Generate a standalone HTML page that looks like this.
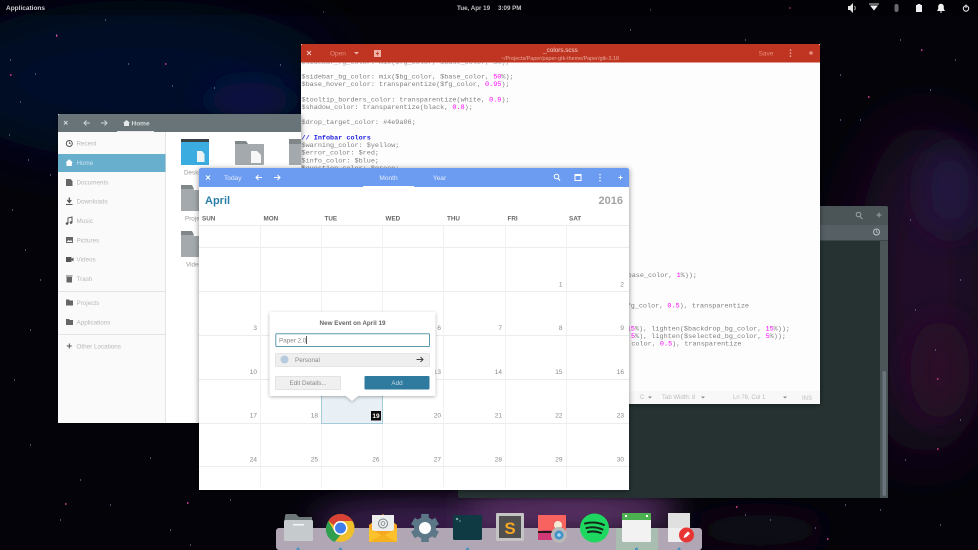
<!DOCTYPE html>
<html><head><meta charset="utf-8"><title>Desktop</title>
<style>
html,body{margin:0;padding:0;background:#03030f;width:978px;height:550px;overflow:hidden}
svg{display:block;font-family:"Liberation Sans",sans-serif}
.m{font-family:"Liberation Mono",monospace;font-size:6.8px;fill:#808080}
.p{fill:#f0f}
.s{font-size:6.3px;fill:#b8b8b8}
.n{font-size:6.5px;fill:#8a8a8a;text-anchor:end}
.d{font-size:6.3px;font-weight:bold;fill:#666}
.h{font-size:6.6px;fill:#e4ecfb}
</style></head><body>
<svg width="978" height="550" viewBox="0 0 978 550" xmlns="http://www.w3.org/2000/svg">
<defs>
<filter id="b1" x="-100%" y="-100%" width="300%" height="300%"><feGaussianBlur stdDeviation="35"/></filter>
<filter id="b2" x="-100%" y="-100%" width="300%" height="300%"><feGaussianBlur stdDeviation="16"/></filter>
<filter id="sh" x="-10%" y="-10%" width="120%" height="120%"><feDropShadow dx="0" dy="1" stdDeviation="3" flood-color="#000" flood-opacity=".45"/></filter>
<filter id="sh2" x="-10%" y="-10%" width="120%" height="120%"><feDropShadow dx="0" dy="1" stdDeviation="1.500" flood-color="#000" flood-opacity=".3"/></filter>
<clipPath id="dockclip"><rect x="276" y="528" width="426" height="22" rx="3"/></clipPath>
</defs>

<!-- wallpaper -->
<rect width="978" height="550" fill="#030309"/>
<ellipse cx="140" cy="80" rx="200" ry="80" fill="#05082a" filter="url(#b1)"/>
<ellipse cx="250" cy="100" rx="45" ry="18" fill="#0c1848" filter="url(#b2)"/>
<ellipse cx="925" cy="290" rx="70" ry="170" fill="#240a2c" filter="url(#b1)"/>
<ellipse cx="950" cy="190" rx="30" ry="45" fill="#241640" filter="url(#b2)"/>
<ellipse cx="940" cy="370" rx="30" ry="50" fill="#2a0a28" filter="url(#b2)"/>
<ellipse cx="420" cy="522" rx="110" ry="20" fill="#3f2354" filter="url(#b2)"/>
<ellipse cx="570" cy="512" rx="110" ry="24" fill="#5b3268" filter="url(#b2)"/>
<ellipse cx="760" cy="530" rx="70" ry="16" fill="#160a1e" filter="url(#b2)"/>
<path d="M10 60h1M35 74h1M56 35h1M105 20h1M128 64h1M9 135h1M20 102h1M28 160h1M50 175h1M12 210h1M25 250h1M40 280h1M30 330h1M14 380h1M30 445h1M80 480h1M110 505h1M60 520h1M150 458h1M215 115h1M172 86h1M280 65h1M214 88h1M323 12h1M650 10h1M630 30h1M700 60h1M745 40h1M840 75h1M860 120h1M900 40h1M930 90h1M955 60h1M910 220h1M840 120h1M960 280h1M915 310h1M935 350h1M960 420h1M905 460h1M745 515h1M770 520h1M815 528h1M845 505h1M940 525h1M880 510h1M230 500h1M170 530h1M190 545h1" stroke="#8a90c8" stroke-width="1" fill="none"/>
<path d="M56 36h1.500M165 64h1.500M10 75h1.500M789 8h1.500M921 50h1.500M868 97h1.500M65 504h1.500M937 379h1.500M187 503h1.500M937 449h1.500M736 507h1.500M827 539h1.500" stroke="#e0409a" stroke-width="1.500" fill="none"/>

<!-- top bar -->
<rect width="978" height="15" fill="#000" opacity=".3"/>
<text x="6" y="10" font-size="6.500" font-weight="bold" fill="#d0d0d0">Applications</text>
<text x="457" y="10" font-size="6.200" font-weight="bold" fill="#c4c4c4">Tue, Apr 19</text>
<text x="498" y="10" font-size="6.200" font-weight="bold" fill="#c4c4c4">3:09 PM</text>
<path d="M848 6h2l3-3v10l-3-3h-2z" fill="#e4e4e4"/><path d="M854.500 6a3 3 0 0 1 0 4" stroke="#bbb" fill="none"/>
<path d="M870 5.500h8l-4 5z" fill="#eee"/><rect x="869" y="3.500" width="10" height="1" fill="#ccc"/>
<rect x="894.500" y="4" width="4" height="8" rx="2" fill="#6a6a6a"/>
<rect x="916" y="5" width="6" height="7" fill="#eee"/><rect x="917.500" y="4" width="3" height="1" fill="#eee"/>
<path d="M937 11h8l-1.200-2V6.500a2.800 2.800 0 0 0-5.600 0V9z" fill="#f0f0f0"/><rect x="940" y="11.500" width="2" height="1" fill="#eee"/>
<circle cx="966" cy="8.500" r="2.700" fill="none" stroke="#eee" stroke-width="1"/><rect x="965.500" y="4.500" width="1" height="3.500" fill="#eee"/>

<!-- terminal -->
<g filter="url(#sh2)">
<rect x="458" y="206" width="430" height="292" rx="2" fill="#263033"/>
</g>
<path d="M458 208a2 2 0 0 1 2-2h426a2 2 0 0 1 2 2v17H458z" fill="#4b5558"/>
<rect x="458" y="225" width="430" height="15" fill="#566064"/>
<rect x="458" y="240" width="430" height="1" fill="#3c4649"/>
<rect x="880" y="241" width="8" height="257" fill="#4c5659"/>
<rect x="882.500" y="371" width="3.500" height="125" rx="1.700" fill="#69757a"/>
<circle cx="858.500" cy="214.500" r="2.300" fill="none" stroke="#9aa3a6" stroke-width="1"/><path d="M860 216.500l2.500 2.500" stroke="#9aa3a6"/>
<path d="M879 212.500v5M876.500 215h5" stroke="#9aa3a6" stroke-width="1"/>
<circle cx="876.500" cy="232" r="3" fill="none" stroke="#bfc5c7" stroke-width="1"/><path d="M876.500 230v2.200h1.500" stroke="#bfc5c7" stroke-width=".7" fill="none"/>

<!-- editor -->
<g filter="url(#sh)"><rect x="301" y="44" width="519" height="360" fill="#fdfdfd"/></g>
<text class="m" x="301.500" y="64" opacity=".7">$sidebar_fg_color: mix($fg_color, $base_color, 5%);</text>
<path d="M301 46a2 2 0 0 1 2-2h515a2 2 0 0 1 2 2v16.500H301z" fill="#c03422"/>
<path d="M307 51l4 4M311 51l-4 4" stroke="#efc4bb" stroke-width="1"/>
<text x="330" y="55.500" font-size="6.500" fill="#e68d7c">Open</text>
<path d="M354 52h5l-2.500 2.500z" fill="#efb4a8"/>
<path d="M374 50h7v7h-7z" fill="#edb0a4"/><path d="M376 53.500h3" stroke="#c03422"/><path d="M377.500 51.500v4" stroke="#c03422" stroke-width=".7"/>
<text x="560.500" y="52" font-size="6.300" fill="#f0d4cd" text-anchor="middle">_colors.scss</text>
<text x="560" y="60" font-size="5.400" fill="#e8a898" text-anchor="middle">~/Projects/Paper/paper-gtk-theme/Paper/gtk-3.18</text>
<text x="766" y="55.500" font-size="6.500" fill="#e68d7c" text-anchor="middle">Save</text>
<path d="M790.500 49.500v1.200M790.500 52.500v1.200M790.500 55.500v1.200" stroke="#efc4bb" stroke-width="1.400"/>
<circle cx="811" cy="53" r="1.800" fill="#e68d7c"/>

<text class="m" x="301.500" y="78.500">$sidebar_bg_color: mix($bg_color, $base_color, <tspan class="p">50</tspan>%);</text>
<text class="m" x="301.500" y="86">$base_hover_color: transparentize($fg_color, <tspan class="p">0.95</tspan>);</text>
<text class="m" x="301.500" y="101.500">$tooltip_borders_color: transparentize(white, <tspan class="p">0.9</tspan>);</text>
<text class="m" x="301.500" y="109">$shadow_color: transparentize(black, <tspan class="p">0.8</tspan>);</text>
<text class="m" x="301.500" y="124">$drop_target_color: #4e9a06;</text>
<text class="m" x="301.500" y="139.500" style="fill:#1a1ae0;font-weight:bold">// Infobar colors</text>
<text class="m" x="301.500" y="147">$warning_color: $yellow;</text>
<text class="m" x="301.500" y="154.500">$error_color: $red;</text>
<text class="m" x="301.500" y="162.500">$info_color: $blue;</text>
<text class="m" x="301.500" y="170">$question_color: $green;</text>
<text class="m" x="697" y="277" text-anchor="end">$base_color, <tspan class="p">1</tspan>%));</text>
<text class="m" x="749" y="307.500" text-anchor="end">$fg_color, <tspan class="p">0.5</tspan>), transparentize</text>
<text class="m" x="790" y="330.500" text-anchor="end"><tspan class="p">15</tspan>%), lighten($backdrop_bg_color, <tspan class="p">15</tspan>%));</text>
<text class="m" x="786" y="338" text-anchor="end"><tspan class="p">5</tspan>%), lighten($selected_bg_color, <tspan class="p">5</tspan>%));</text>
<text class="m" x="741.500" y="345.500" text-anchor="end">color, <tspan class="p">0.5</tspan>), transparentize</text>
<rect x="301" y="391" width="519" height="13" fill="#f8f8f8"/>
<g font-size="6" fill="#bdbdbd">
<text x="640" y="399">C</text><path d="M648 396.500h4l-2 2z" fill="#888"/>
<text x="662" y="399">Tab Width: 8</text><path d="M701 396.500h4l-2 2z" fill="#888"/>
<text x="733" y="399">Ln 76, Col 1</text><path d="M783 396.500h4l-2 2z" fill="#888"/>
<text x="802" y="400">INS</text>
</g>

<!-- files -->
<g filter="url(#sh)"><rect x="58" y="114" width="243" height="309" fill="#fff"/></g>
<path d="M58 116a2 2 0 0 1 2-2h241v18H58z" fill="#687478"/>
<rect x="117" y="131" width="37" height="1" fill="#e6e6e6"/>
<path d="M64 121l3.500 3.500M67.500 121l-3.500 3.500" stroke="#d5dadb" stroke-width="1"/>
<path d="M90 123h-6m2.500-2.500L84 123l2.500 2.500M101 123h6m-2.500-2.500L107 123l-2.500 2.500" stroke="#cfd5d6" stroke-width="1" fill="none"/>
<path d="M123 123l3.500-3 3.500 3h-1v3h-5v-3z" fill="#e4e8e8"/>
<text x="131.500" y="125.500" font-size="6.500" font-weight="bold" fill="#d5dadb">Home</text>
<rect x="58" y="132" width="107" height="291" fill="#fafafa"/>
<rect x="165" y="132" width="1" height="291" fill="#e4e4e4"/>
<rect x="58" y="154" width="107.500" height="18" fill="#68aecd"/>
<text class="s" x="76.500" y="145.500">Recent</text>
<text class="s" x="76.500" y="165" style="fill:#c9e4f0">Home</text>
<text class="s" x="76.500" y="184.500">Documents</text>
<text class="s" x="76.500" y="203.500">Downloads</text>
<text class="s" x="76.500" y="223">Music</text>
<text class="s" x="76.500" y="242.500">Pictures</text>
<text class="s" x="76.500" y="261.500">Videos</text>
<text class="s" x="76.500" y="281">Trash</text>
<text class="s" x="76.500" y="305">Projects</text>
<text class="s" x="76.500" y="324.500">Applications</text>
<text class="s" x="76.500" y="348.500">Other Locations</text>
<rect x="58" y="291" width="107" height="1" fill="#e4e4e4"/>
<rect x="58" y="334" width="107" height="1" fill="#e4e4e4"/>
<circle cx="69.300" cy="143.500" r="3" fill="none" stroke="#555" stroke-width="1"/><path d="M69.300 141.500v2.200h1.500" stroke="#555" stroke-width=".7" fill="none"/>
<path d="M65.500 162.500l3.700-3.300 3.700 3.300h-1v3.500h-5.400v-3.500z" fill="#fff"/>
<path d="M66 179h4.500l2 2v5H66z" fill="#666"/>
<path d="M69.300 197.500v4m-2-1.500l2 2.500 2-2.500" stroke="#555" stroke-width="1.300" fill="none"/><rect x="66" y="204" width="6.500" height="1" fill="#555"/>
<path d="M68 223.500v-5.500l4-1v5.500" stroke="#555" fill="none"/><circle cx="67" cy="223.500" r="1.300" fill="#555"/><circle cx="71" cy="222.500" r="1.300" fill="#555"/>
<rect x="66" y="237" width="7" height="6" fill="#666"/><path d="M66.500 242l2-2 1.500 1 1-1 1.500 2z" fill="#fafafa"/>
<rect x="66" y="257" width="5.500" height="5" fill="#555"/><path d="M71.500 259l2-1.500v4l-2-1.500z" fill="#555"/>
<path d="M66.500 277h5.500v5.500h-5.500z" fill="#666"/><rect x="66" y="275.500" width="6.500" height="1" fill="#666"/>
<path d="M66 299.500h3l1 1h3v5h-7z" fill="#666"/>
<path d="M66 319h3l1 1h3v5h-7z" fill="#666"/>
<path d="M69.300 343.500v5M66.800 346h5" stroke="#555" stroke-width="1"/>

<path d="M181 141.500a2.500 2.500 0 0 1 2.500-2.500h23a2.500 2.500 0 0 1 2.500 2.500V165h-28z" fill="#3bacdf"/><rect x="181" y="139" width="28" height="3" fill="#3a4246"/>
<path d="M197 151h5l2.500 3v8H197z" fill="#eef3f5"/>
<path d="M235 141h11l2 3h16v20a1 1 0 0 1-1 1h-27a1 1 0 0 1-1-1z" fill="#a3a9ac"/><path d="M235 141h11l2 3h-13z" fill="#808789"/>
<path d="M251 151h6l4 4v8h-10z" fill="#f7f7f7"/>
<path d="M289 141h12v24h-12z" fill="#a3a9ac"/><rect x="289" y="139" width="12" height="5" fill="#808789"/>
<path d="M181 187h11l2 3h6v21h-19z" fill="#a3a9ac"/><path d="M181 185h11l2 4h-13z" fill="#808789"/>
<path d="M181 233h11l2 3h6v21h-19z" fill="#a3a9ac"/><path d="M181 231h11l2 4h-13z" fill="#808789"/>
<g font-size="6.300" fill="#9a9a9a">
<text x="184" y="174.500">Desktop</text><text x="185" y="220.500">Projects</text><text x="186" y="266.500">Videos</text>
</g>

<!-- calendar -->
<g filter="url(#sh)"><rect x="199" y="168" width="430" height="322" fill="#fff"/></g>
<path d="M199 170a2 2 0 0 1 2-2h426a2 2 0 0 1 2 2v17H199z" fill="#6c9cf1"/>
<rect x="363" y="186" width="51" height="1" fill="#fff"/>
<path d="M206 175.500l4 4M210 175.500l-4 4" stroke="#fff" stroke-width="1"/>
<text class="h" x="224" y="180">Today</text>
<path d="M262 177.500h-6m2.500-2.500L256 177.500l2.500 2.500M274 177.500h6m-2.500-2.500l2.500 2.500-2.500 2.500" stroke="#fff" stroke-width="1" fill="none"/>
<text class="h" x="388.500" y="180" text-anchor="middle">Month</text>
<text class="h" x="439.500" y="180" text-anchor="middle">Year</text>
<circle cx="556.500" cy="176.500" r="2.300" fill="none" stroke="#fff" stroke-width="1"/><path d="M558 178.500l2 2" stroke="#fff" stroke-width="1.200"/>
<rect x="575" y="174.500" width="6" height="6" fill="none" stroke="#fff" stroke-width="1"/><rect x="575" y="174.500" width="6" height="1.500" fill="#fff"/>
<path d="M600 174v1.300M600 177v1.300M600 180v1.300" stroke="#fff" stroke-width="1.300"/>
<path d="M620.500 175.500v4M618.500 177.500h4" stroke="#fff" stroke-width="1"/>
<text x="205" y="204" font-size="11" font-weight="bold" fill="#2a7fa8">April</text>
<text x="623" y="204" font-size="11" font-weight="bold" fill="#a3a3a3" text-anchor="end">2016</text>
<text class="d" x="202" y="220.500">SUN</text><text class="d" x="263.500" y="220.500">MON</text><text class="d" x="324.500" y="220.500">TUE</text><text class="d" x="385.500" y="220.500">WED</text><text class="d" x="447" y="220.500">THU</text><text class="d" x="507.500" y="220.500">FRI</text><text class="d" x="569" y="220.500">SAT</text>
<path d="M199 225.500h430M199 247.500h430M199 291.500h430M199 335.500h430M199 379.500h430M199 423.500h430M199 466.500h430" stroke="#ececec" stroke-width="1"/>
<path d="M260.500 225v262M321.500 225v262M382.500 225v262M443.500 225v262M505.500 225v262M566.500 225v262" stroke="#f1f1f1" stroke-width="1"/>
<rect x="321.500" y="396" width="61" height="27.500" fill="#e8f0f5"/>
<path d="M321.500 396v27.500h61V396" fill="none" stroke="#a4cadb" stroke-width="1"/>
<text class="n" x="562.500" y="286.500">1</text><text class="n" x="624" y="286.500">2</text>
<text class="n" x="257" y="330">3</text><text class="n" x="441" y="330">6</text><text class="n" x="502" y="330">7</text><text class="n" x="562.500" y="330">8</text><text class="n" x="624" y="330">9</text>
<text class="n" x="257" y="374">10</text><text class="n" x="441" y="374">13</text><text class="n" x="502" y="374">14</text><text class="n" x="562.500" y="374">15</text><text class="n" x="624" y="374">16</text>
<text class="n" x="257" y="417.500">17</text><text class="n" x="318" y="417.500">18</text><text class="n" x="441" y="417.500">20</text><text class="n" x="502" y="417.500">21</text><text class="n" x="562.500" y="417.500">22</text><text class="n" x="624" y="417.500">23</text>
<text class="n" x="257" y="461.500">24</text><text class="n" x="318" y="461.500">25</text><text class="n" x="379.500" y="461.500">26</text><text class="n" x="441" y="461.500">27</text><text class="n" x="502" y="461.500">28</text><text class="n" x="562.500" y="461.500">29</text><text class="n" x="624" y="461.500">30</text>
<rect x="371" y="411" width="10" height="9.500" fill="#0a0a0a"/>
<text x="376" y="418" font-size="6.500" font-weight="bold" fill="#fff" text-anchor="middle">19</text>

<!-- popover -->
<path filter="url(#sh2)" d="M271 312h163a1.500 1.500 0 0 1 1.500 1.500V394.500a1.500 1.500 0 0 1-1.500 1.500H358l-6 5-6-5H271a1.500 1.500 0 0 1-1.500-1.500V313.500A1.500 1.500 0 0 1 271 312z" fill="#fff"/>
<text x="352.500" y="325" font-size="6.300" font-weight="bold" fill="#666" text-anchor="middle">New Event on April 19</text>
<rect x="275.800" y="333.800" width="153.700" height="12.700" rx="1" fill="#fff" stroke="#5b9ab0" stroke-width="1"/>
<text x="279" y="342.500" font-size="6.300" fill="#888">Paper 2.0</text>
<rect x="306" y="336" width=".8" height="8" fill="#333"/>
<rect x="275.500" y="353.500" width="154" height="13" rx="1" fill="#efefef" stroke="#e4e4e4"/>
<circle cx="284.500" cy="359.500" r="4" fill="#b6cbde"/>
<text x="295" y="362" font-size="6.300" fill="#888">Personal</text>
<path d="M416.500 359.500h6.500m-2.500-2.500l2.500 2.500-2.500 2.500" stroke="#444" stroke-width="1" fill="none"/>
<rect x="275.500" y="376.500" width="65" height="13" rx="1" fill="#f0f0f0" stroke="#e2e2e2"/>
<text x="308" y="385" font-size="6.300" fill="#888" text-anchor="middle">Edit Details...</text>
<rect x="364.500" y="376" width="65" height="13.500" rx="1" fill="#2f7a9f"/>
<text x="397" y="385" font-size="6.300" fill="#c6dde8" text-anchor="middle">Add</text>

<!-- dock -->
<rect x="276" y="528" width="426" height="22" rx="3" fill="#b1a7b4"/>
<rect x="616" y="528" width="42" height="22" fill="#a9bdb0" clip-path="url(#dockclip)"/>
<g fill="#4a90c0"><circle cx="298" cy="549" r="1.500"/><circle cx="340.500" cy="549" r="1.500"/><circle cx="467.500" cy="549" r="1.500"/><circle cx="636.500" cy="549" r="1.500"/><circle cx="679" cy="549" r="1.500"/></g>
<!-- folder -->
<path d="M285 516a2 2 0 0 1 2-2h9l3 3h13v8h-28z" fill="#6d777a"/>
<rect x="284" y="520" width="29" height="21" rx="1.500" fill="#c5cbcd"/>
<rect x="293" y="524" width="11" height="1.500" fill="#f4f5f5"/>
<!-- chrome -->
<circle cx="340.500" cy="528" r="14" fill="#f0bf2c"/>
<path d="M328.400 521a14 14 0 0 1 24.200 0H340.500a7 7 0 0 0-6.500 4.500z" fill="#d84235"/>
<path d="M328.400 521l6.100 10.500a7 7 0 0 0 6 3.500l-6 7A14 14 0 0 1 328.400 521z" fill="#2f9e4f"/>
<circle cx="340.500" cy="528" r="7" fill="#fff"/><circle cx="340.500" cy="528" r="5.500" fill="#3f7ee8"/>
<!-- mail -->
<path d="M369 525l14-11 14 11v16a1 1 0 0 1-1 1h-26a1 1 0 0 1-1-1z" fill="#f5a623"/>
<path d="M372 515h22v16h-22z" fill="#eceeee"/>
<circle cx="383" cy="523.500" r="4.500" fill="none" stroke="#7a8285" stroke-width="1"/><circle cx="383" cy="523.500" r="1.900" fill="none" stroke="#7a8285" stroke-width=".8"/>
<path d="M369 528l14 8 14-8v13a1 1 0 0 1-1 1h-26a1 1 0 0 1-1-1z" fill="#fcc22d"/>
<path d="M369 542l14-8 14 8z" fill="#f5b21f"/>
<!-- gear -->
<circle cx="425" cy="528" r="11" fill="#5c7886"/>
<path d="M425 514v28M412.900 521l24.200 14M412.900 535l24.200-14" stroke="#5c7886" stroke-width="7.500"/>
<circle cx="425" cy="528" r="6" fill="#fff"/>
<!-- terminal -->
<rect x="453" y="515" width="29" height="25" rx="1.500" fill="#0f3a44"/>
<path d="M456 518l2 1-2 1M459 521h2" stroke="#cfe" stroke-width=".6" fill="none"/>
<!-- sublime -->
<rect x="496" y="513" width="28" height="28" rx="1" fill="#c4c4c4"/>
<rect x="499" y="516" width="22" height="22" fill="#4f4f4f"/>
<text x="510" y="534" font-size="17" font-weight="bold" fill="#f5a623" text-anchor="middle">S</text>
<!-- photos -->
<rect x="538" y="515" width="28" height="25" fill="#f8635f"/>
<circle cx="558" cy="525" r="4" fill="#f4ead6"/>
<path d="M538 531l8-1 12 1v9h-20z" fill="#d03878"/><path d="M538 533v-2h14l3 2z" fill="#2b1a1c"/>
<circle cx="559" cy="535" r="8" fill="#b8b8b8"/><circle cx="559" cy="535" r="4.500" fill="#3f93c8"/><circle cx="559" cy="535" r="1.800" fill="#a8d8f0"/>
<!-- spotify -->
<circle cx="594.500" cy="528" r="14.500" fill="#1ed760"/>
<path d="M585 523.500q10-2.500 19 1.500M586.500 528q8-2 16 1.500M588 532q7-1.500 13 1" stroke="#14291b" stroke-width="2" stroke-linecap="round" fill="none"/>
<!-- calendar -->
<rect x="622" y="513" width="29" height="29" rx="1.500" fill="#f2f2f2"/>
<path d="M622 514.500a1.500 1.500 0 0 1 1.500-1.500h26a1.500 1.500 0 0 1 1.500 1.500V520h-29z" fill="#4caf50"/>
<rect x="625" y="515" width="2" height="2" fill="#fff"/><rect x="646" y="515" width="2" height="2" fill="#fff"/>
<!-- text editor -->
<rect x="668" y="513" width="22" height="29" rx="1" fill="#eeeeee"/>
<rect x="668" y="513" width="22" height="15" fill="#e0e0e0"/>
<circle cx="686.500" cy="535" r="7.500" fill="#e93434"/>
<path d="M683.500 538l1-3 3.500-3.500 2 2-3.500 3.500z" fill="#fff"/>
</svg>
</body></html>
